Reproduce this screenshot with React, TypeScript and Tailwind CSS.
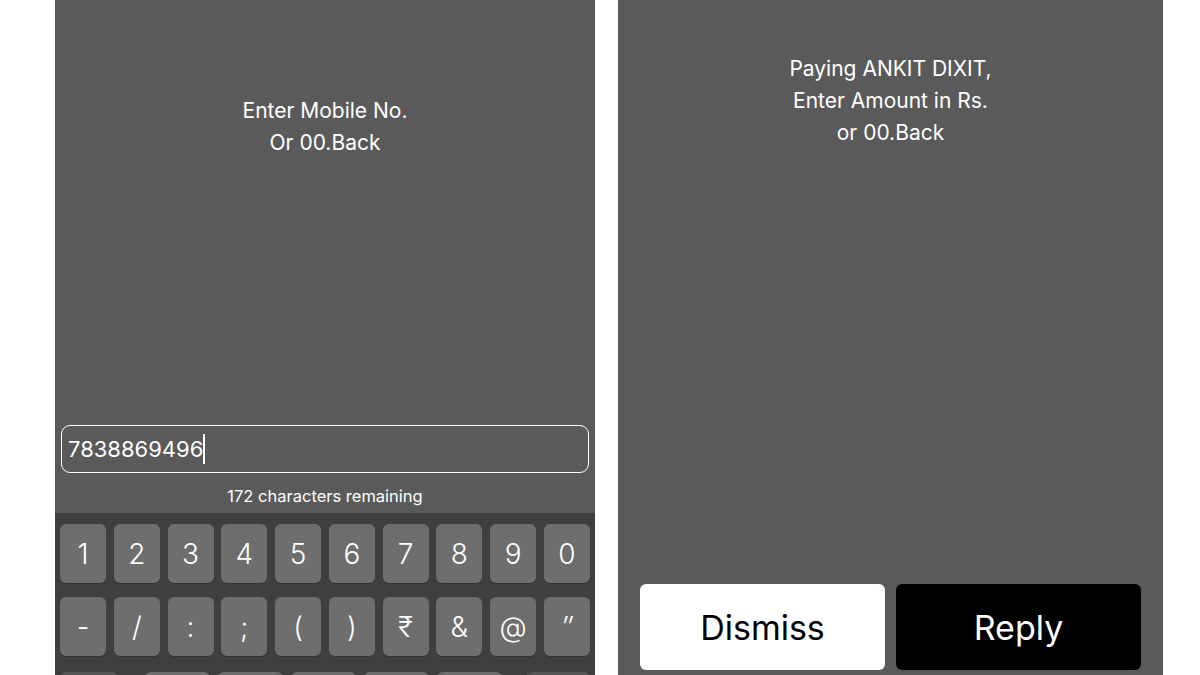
import React from 'react';

const row1 = ['1', '2', '3', '4', '5', '6', '7', '8', '9', '0'];
const row2 = ['-', '/', ':', ';', '(', ')', '₹', '&', '@', '″'];

const font = { fontFamily: 'Inter, "Noto Sans", "DejaVu Sans", sans-serif' };

const Key: React.FC<{ label: string }> = ({ label }) => (
  <div className="w-[46px] h-[59px] rounded-[6px] bg-[#6e6e6e] flex items-center justify-center text-white text-[28px] font-light shadow-[0_1px_0_#333333]">
    {label === '″' ? <span className="italic">{label}</span> : label}
  </div>
);

const LeftPanel: React.FC = () => (
  <div className="w-[540px] h-[675px] bg-[#5a5a5a] flex flex-col overflow-hidden">
    {/* Prompt */}
    <div className="pt-[95px] text-center text-white text-[21px] leading-8">
      <p>Enter Mobile No.</p>
      <p>Or 00.Back</p>
    </div>

    <div className="flex-1" />

    {/* Input */}
    <div className="mx-[6px] h-[48px] rounded-[9px] border border-white flex items-center pl-[6px]">
      <span className="text-white text-[22px]">7838869496</span>
      <span className="w-[2px] h-[30px] bg-white" />
    </div>
    <div className="pt-[13px] pb-[7px] text-center text-white text-[16.5px] leading-5">
      172 characters remaining
    </div>

    {/* Keyboard */}
    <div className="h-[162px] shrink-0 bg-[#3f3f3f] pt-[11px] px-[5px] flex flex-col">
      <div className="flex justify-between">
        {row1.map((k) => (
          <Key key={k} label={k} />
        ))}
      </div>
      <div className="mt-[14px] flex justify-between">
        {row2.map((k) => (
          <Key key={k} label={k} />
        ))}
      </div>
      <div className="mt-[16px] flex items-start">
        <div className="w-[58px] h-[59px] rounded-[6px] bg-[#565656]" />
        <div className="ml-[27px] flex gap-[8px]">
          {[0, 1, 2, 3, 4].map((i) => (
            <div key={i} className="w-[65px] h-[59px] rounded-[6px] bg-[#6e6e6e]" />
          ))}
        </div>
        <div className="ml-auto w-[64px] h-[59px] rounded-[6px] bg-[#565656]" />
      </div>
    </div>
  </div>
);

const RightPanel: React.FC = () => (
  <div className="w-[545px] h-[675px] bg-[#5a5a5a] flex flex-col overflow-hidden">
    <div className="pt-[53px] text-center text-white text-[21px] leading-8">
      <p>Paying ANKIT DIXIT,</p>
      <p>Enter Amount in Rs.</p>
      <p>or 00.Back</p>
    </div>

    <div className="flex-1" />

    {/* Actions */}
    <div className="flex gap-[11px] px-[22px] pb-[5px]">
      <button className="flex-1 h-[86px] rounded-[6px] bg-white text-black text-[34px]">
        Dismiss
      </button>
      <button className="flex-1 h-[86px] rounded-[6px] bg-black text-white text-[34px]">
        Reply
      </button>
    </div>
  </div>
);

export default function App() {
  return (
    <div className="w-[1200px] h-[675px] bg-white flex pl-[55px] gap-[23px] overflow-hidden" style={font}>
      <LeftPanel />
      <RightPanel />
    </div>
  );
}
